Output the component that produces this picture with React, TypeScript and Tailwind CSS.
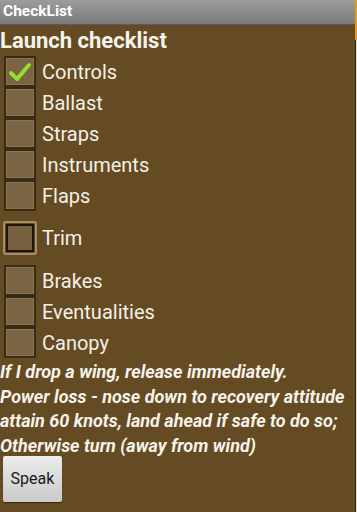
const items = [
  { label: "Controls", checked: true },
  { label: "Ballast" },
  { label: "Straps" },
  { label: "Instruments" },
  { label: "Flaps" },
  { label: "Trim", focused: true },
  { label: "Brakes" },
  { label: "Eventualities" },
  { label: "Canopy" },
];

function Box({ checked, focused }: { checked?: boolean; focused?: boolean }) {
  if (focused) {
    return (
      <div className="w-[34px] h-[34px] rounded-[3px] border-2 border-[#a48d68] p-px">
        <div className="w-full h-full border-2 border-[#1f1608] bg-[#766040]" />
      </div>
    );
  }
  return (
    <div className="w-[32px] h-[31px] border-2 border-[#3a2b14] bg-[#7a6444] shadow-[inset_0_0_0_1px_#8a7553] flex items-center justify-center">
      {checked && (
        <svg width="22" height="20" viewBox="0 0 22 20">
          <path
            d="M2 11 L8 17 L20 3"
            fill="none"
            stroke="#8fe12a"
            strokeWidth="4"
            strokeLinecap="round"
            strokeLinejoin="round"
          />
        </svg>
      )}
    </div>
  );
}

export default function App() {
  return (
    <div
      className="w-[357px] h-[512px] flex bg-[#644b23] overflow-hidden"
      style={{ fontFamily: "Roboto, 'Liberation Sans', sans-serif" }}
    >
      <div className="w-[355px] flex flex-col">
        <div className="h-[25px] shrink-0 bg-gradient-to-b from-[#9c9c9c] to-[#7b7b7b] border-b border-[#5a5a5a] px-[3px] flex items-center">
          <span className="text-white font-bold text-[15.5px]">CheckList</span>
        </div>
        <div className="text-[#f7f3ea] font-bold text-[22px] leading-[30px] mt-[1px]">Launch checklist</div>
        <div className="flex flex-col">
          {items.map((it) => (
            <div
              key={it.label}
              className={
                it.focused
                  ? "flex items-center h-[54px] pl-[3px] gap-[5px]"
                  : "flex items-center h-[31px] pl-[4px] gap-[6px]"
              }
            >
              <Box checked={it.checked} focused={it.focused} />
              <span className="text-[#f4f0e6] text-[20px] leading-none">{it.label}</span>
            </div>
          ))}
        </div>
        <div className="text-[#f7f3ea] font-bold italic text-[18px] leading-[24.5px] mt-[2px] whitespace-nowrap">
          <div>If I drop a wing, release immediately.</div>
          <div>Power loss - nose down to recovery attitude</div>
          <div>attain 60 knots, land ahead if safe to do so;</div>
          <div>Otherwise turn (away from wind)</div>
        </div>
        <div className="pl-[3px] mt-[-2px]">
          <button className="w-[59px] h-[46px] rounded-[2px] bg-gradient-to-b from-[#ececec] to-[#cacaca] shadow-[0_1px_1px_rgba(0,0,0,0.5)] text-[16px] text-[#1a1a1a]">
            Speak
          </button>
        </div>
      </div>
      <div className="w-[2px] flex flex-col">
        <div className="h-[40px] bg-[#e69a1c]" />
        <div className="flex-1 flex">
          <div className="w-px bg-[#2e200c]" />
          <div className="w-px bg-[#e8e4dc]" />
        </div>
      </div>
    </div>
  );
}
